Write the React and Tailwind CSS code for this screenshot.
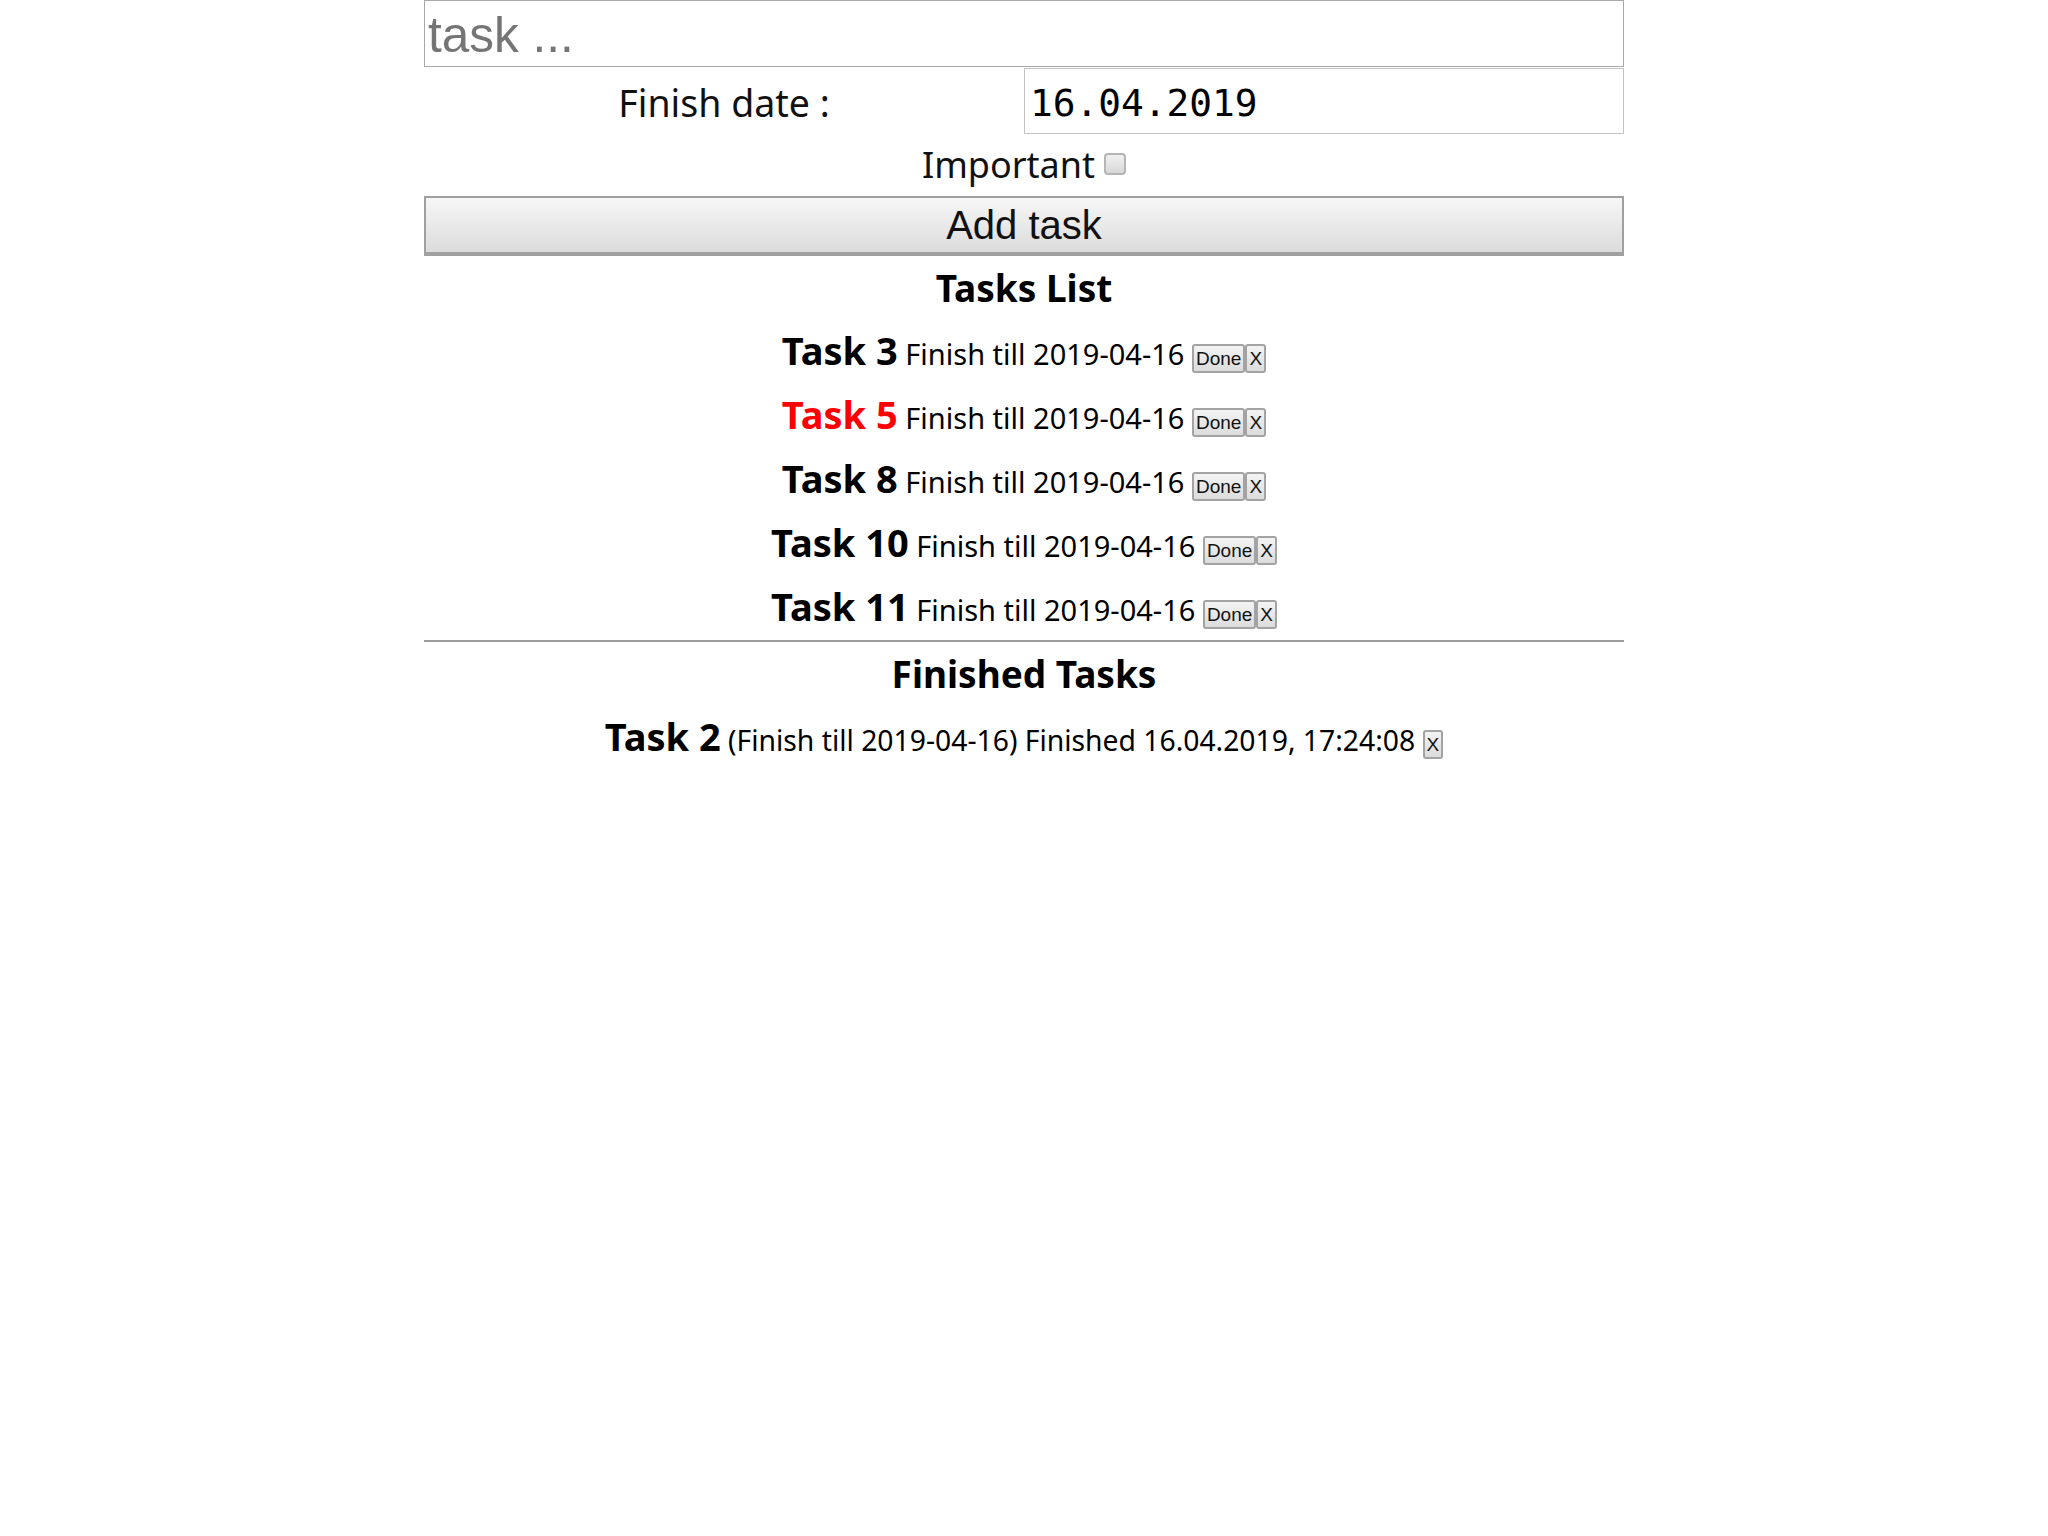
import React, { useState } from 'react'

const tasks = [
  { id: 3, important: false, date: '2019-04-16' },
  { id: 5, important: true, date: '2019-04-16' },
  { id: 8, important: false, date: '2019-04-16' },
  { id: 10, important: false, date: '2019-04-16' },
  { id: 11, important: false, date: '2019-04-16' },
];

const SmallButton = ({ children }) => (
  <button className="inline-block align-baseline h-[29px] px-[2px] border-2 border-[#a3a3a3] rounded-[3px] bg-gradient-to-b from-[#f3f3f3] to-[#dcdcdc] text-[19px] leading-[25px] text-[#111] font-['Liberation_Sans',Arial,sans-serif]">
    {children}
  </button>
);

const TaskRow = ({ task }) => (
  <div className="h-[64px] leading-[64px] text-center whitespace-nowrap">
    <span className={`text-[38px] font-bold ${task.important ? 'text-[#ff0000]' : 'text-black'}`}>Task {task.id}</span>
    <span className="text-[29px]"> Finish till {task.date} </span>
    <SmallButton>Done</SmallButton>
    <SmallButton>X</SmallButton>
  </div>
);

const App = () => {
  const [text, setText] = useState('');
  const [important, setImportant] = useState(false);

  return (
    <div className="min-h-screen bg-white text-black font-['Noto_Sans',sans-serif]">
      <div className="w-[1200px] mx-auto">
        <input
          type="text"
          value={text}
          onChange={(e) => setText(e.target.value)}
          placeholder="task ..."
          className="block w-full h-[67px] border border-[#a9a9a9] px-[3px] pt-[4px] text-[49.5px] text-black placeholder:text-[#757575] font-['Liberation_Sans',Arial,sans-serif] outline-none"
        />

        <div className="grid grid-cols-2 mt-[1px]">
          <div className="flex items-center justify-center pt-[4px] text-[37.5px] text-[#111]">Finish date :</div>
          <input
            type="text"
            readOnly
            value="16.04.2019"
            className="block w-full h-[66px] border border-[#c4c4c4] px-[5px] pt-[4px] text-[37.8px] font-['DejaVu_Sans_Mono',monospace] text-black outline-none"
          />
        </div>

        <div className="h-[62px] flex items-center justify-center gap-[9px]">
          <span className="text-[36px] text-[#111]">Important</span>
          <button
            onClick={() => setImportant(!important)}
            className="w-[22px] h-[22px] rounded-[4px] border-2 border-[#b5b5b5] bg-gradient-to-b from-[#f0f0f0] to-[#d8d8d8] mb-[2px]"
          />
        </div>

        <button className="block w-full h-[60px] border-2 border-b-4 border-[#a0a0a0] bg-gradient-to-b from-[#f7f7f7] to-[#dcdcdc] text-[40px] leading-[50px] text-[#111] font-['Liberation_Sans',Arial,sans-serif]">
          Add task
        </button>

        <div className="h-[62px] leading-[64px] text-center text-[37px] font-bold">Tasks List</div>
        {tasks.map((t) => (
          <TaskRow key={t.id} task={t} />
        ))}

        <hr className="mt-[2px] border-0 border-t-2 border-[#9a9a9a]" />

        <div className="h-[62px] leading-[64px] text-center text-[37px] font-bold">Finished Tasks</div>
        <div className="h-[64px] leading-[64px] text-center whitespace-nowrap">
          <span className="text-[38px] font-bold">Task 2</span>
          <span className="text-[28.3px]"> (Finish till 2019-04-16) Finished 16.04.2019, 17:24:08 </span>
          <SmallButton>X</SmallButton>
        </div>
      </div>
    </div>
  );
};

export default App;
